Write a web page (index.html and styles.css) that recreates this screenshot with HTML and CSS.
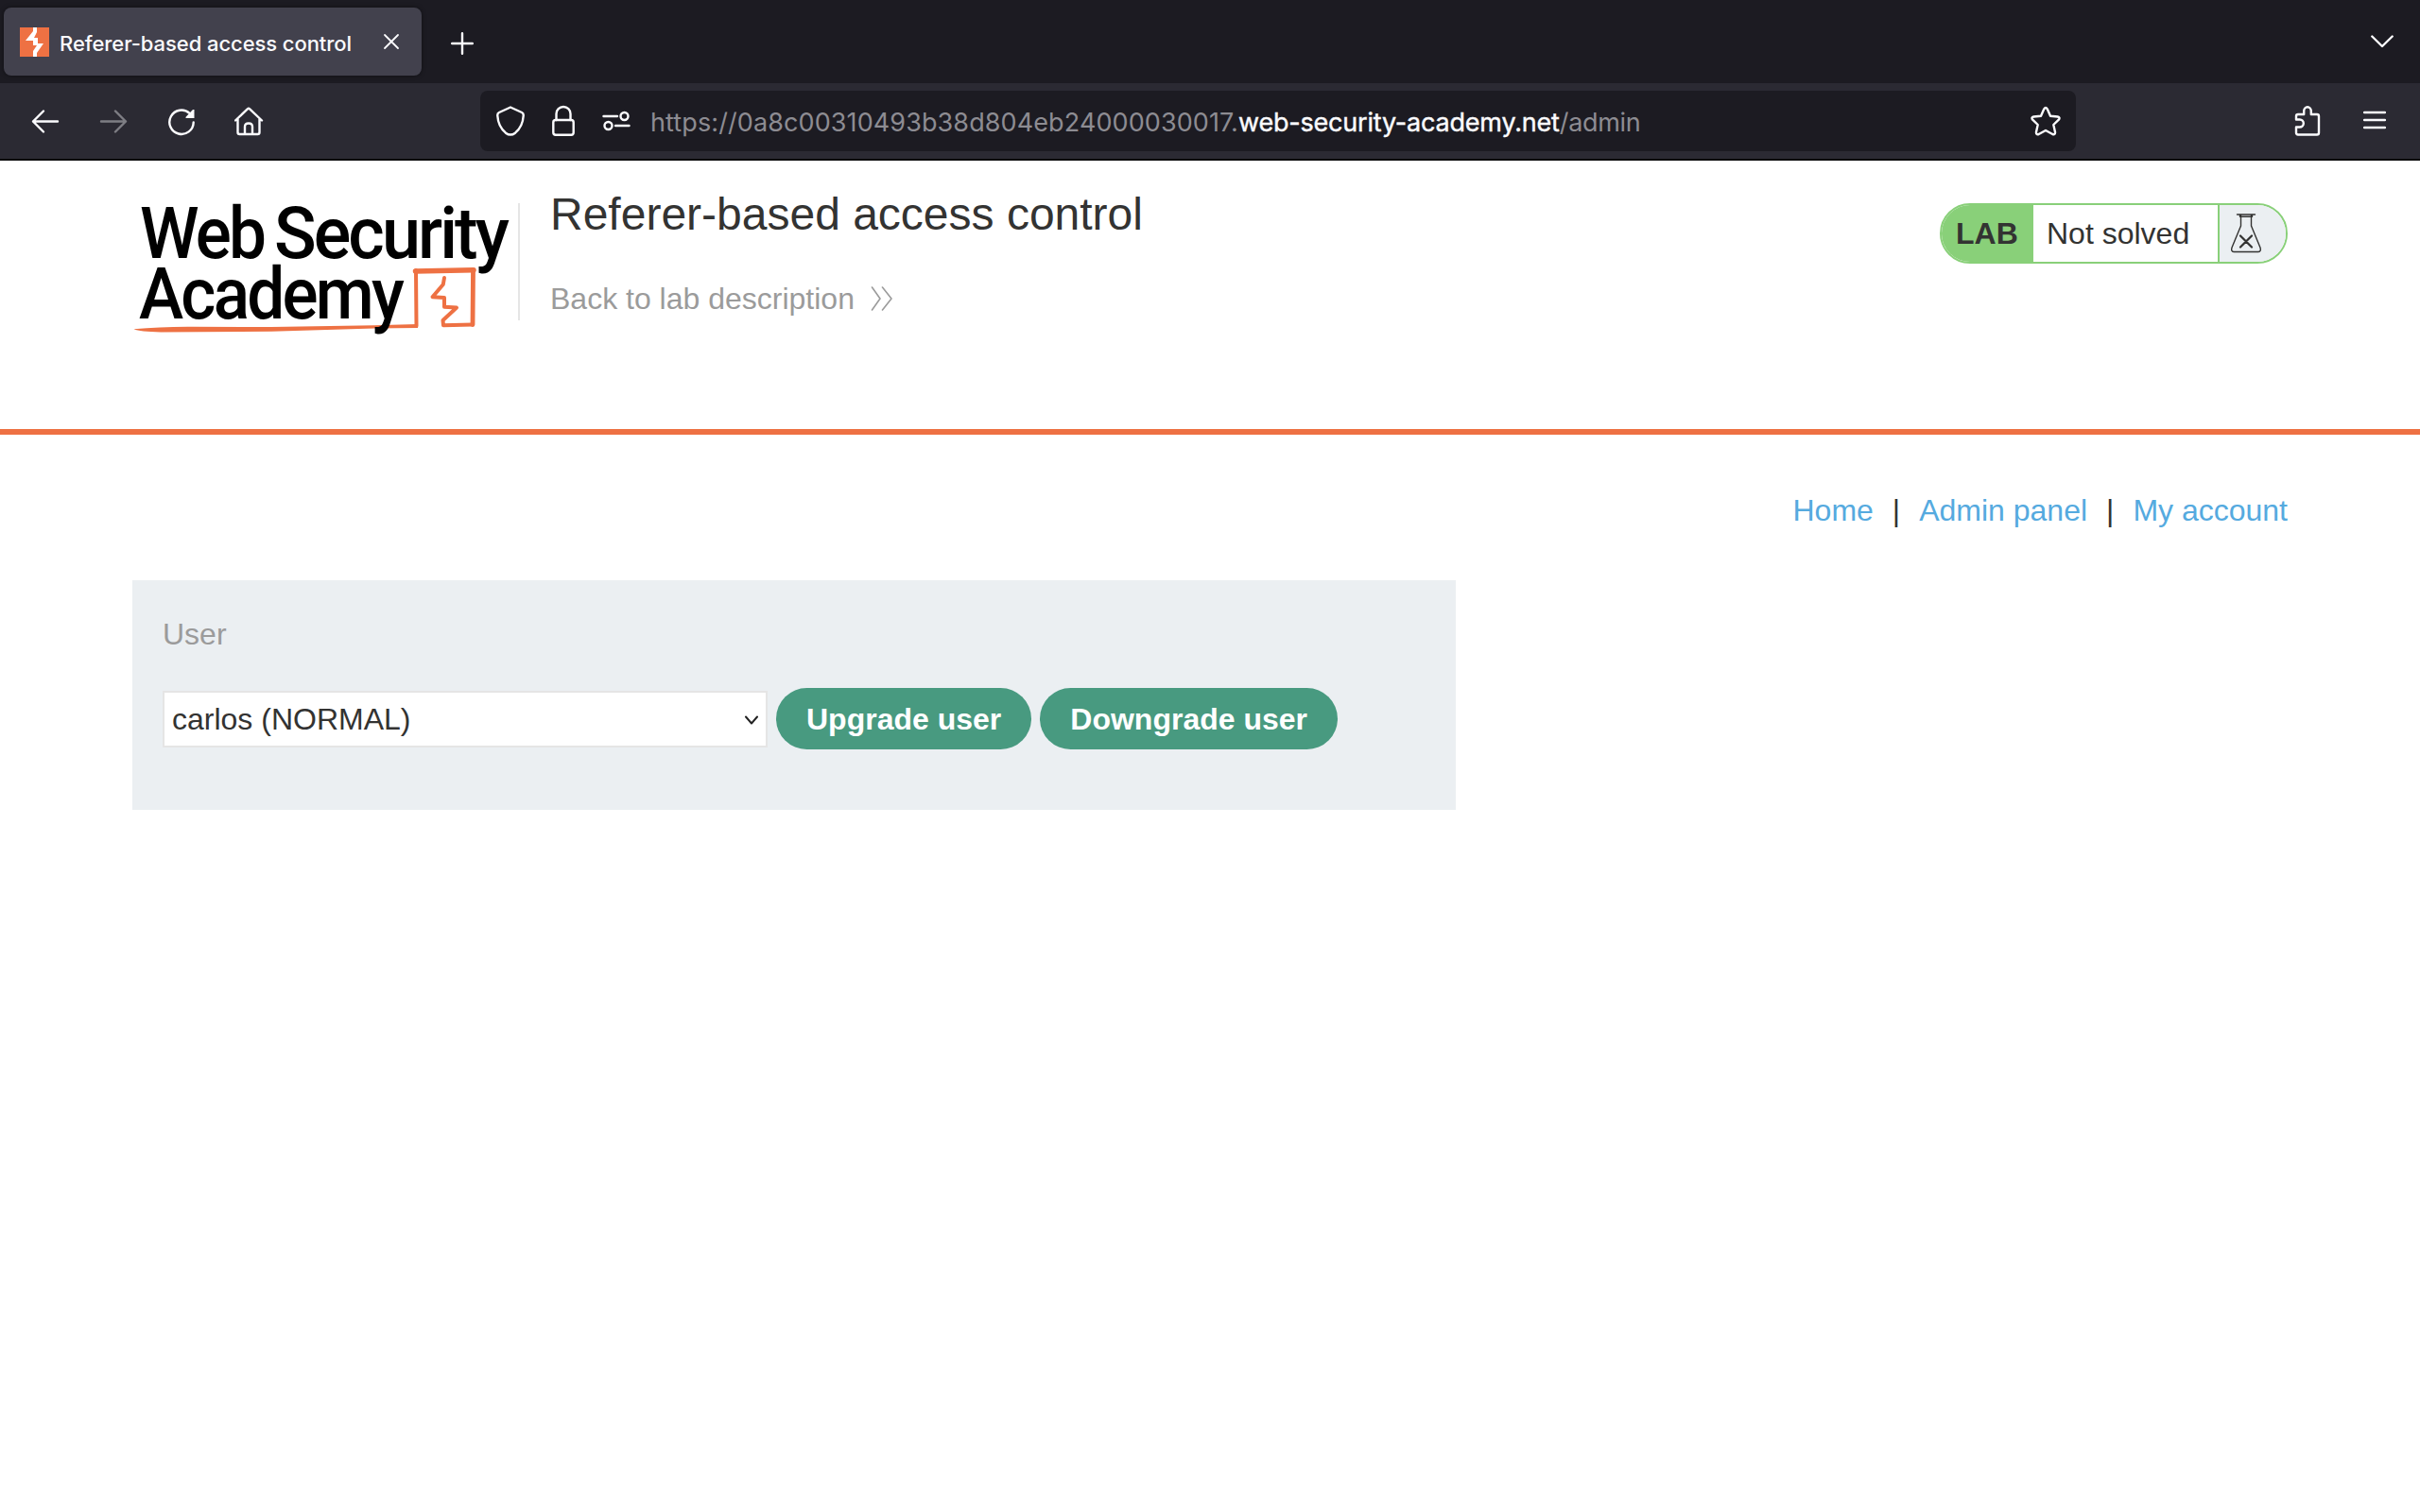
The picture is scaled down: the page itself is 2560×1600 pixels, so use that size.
FILE: index.html
```html
<!DOCTYPE html>
<html lang="en">
<head>
<meta charset="utf-8">
<title>Referer-based access control</title>
<link rel="stylesheet" href="styles.css">
</head>
<body>
<div class="tabs">
  <div class="tab">
    <svg class="favicon" viewBox="0 0 31 31"><rect width="31" height="31" fill="#ee7143"/><path d="M14 0h4v5l-3 6h4v6h6l-7 10v4h-4v-6l4-6h-4v-5H6l8-10z" fill="#fff"/></svg>
    <span class="tab-title">Referer-based access control</span>
    <svg class="tab-close" viewBox="0 0 18 18"><path d="M2 2l14 14M16 2L2 16"/></svg>
  </div>
  <svg class="new-tab" viewBox="0 0 24 24"><path d="M12 1.2v21.6M1.2 12h21.6"/></svg>
  <svg class="all-tabs" viewBox="0 0 24 14"><path d="M1.3 1.5L12 12L22.7 1.5"/></svg>
</div>
<div class="toolbar">
  <div class="nav-buttons">
    <svg viewBox="0 0 32 32"><path d="M29 16.500H3M14 5.500L3 16.500L14 27.500"/></svg>
    <svg class="dim" viewBox="0 0 32 32"><path d="M3 16.500h26M18 5.500l11 11l-11 11"/></svg>
    <svg viewBox="0 0 32 32"><path d="M28.700 17.500A12.700 12.700 0 1 1 24.500 7.800"/><path d="M29.500 4v9h-8.500q-1.200-.3-.4-1.300L28 4z" fill="#fbfbfe" stroke="none"/></svg>
    <svg viewBox="1 0 32 32"><path d="M2 15.500L14.800 3.300Q16 2.300 17.200 3.300L30 15.500M4.500 13.500V28Q4.500 30 6.500 30H25.500Q27.500 30 27.500 28V13.500M12 29.500V22Q12 18.500 16 18.500T20 22V29.500"/></svg>
  </div>
  <div class="urlbar">
    <svg class="shield" viewBox="0 0 32 34"><path d="M16 2.500L28 8Q30 9 29.700 11.500Q29 23 21 29.700Q16 33.500 11 29.700Q3 23 2.300 11.500Q2 9 4 8Z"/></svg>
    <svg class="lock" viewBox="0 0 26 34"><path d="M5.500 16V9.500a7.500 7.500 0 0 1 15 0V16"/><rect x="2.300" y="16" width="21.400" height="15.700" rx="2.500"/></svg>
    <svg class="perm" viewBox="0 0 30 22"><path d="M1.500 6H16M14 16H28.500"/><circle cx="23.500" cy="6" r="4"/><circle cx="6.500" cy="16" r="4"/></svg>
    <span class="url"><span class="sub">https://0a8c00310493b38d804eb24000030017.</span><span class="host">web-security-academy.net</span><span class="path">/admin</span></span>
    <svg class="star" viewBox="0 0 32 32"><path d="M14.300 3.300Q16 .6 17.700 3.300L21 10.700L28.700 11.500Q31.700 12.300 29.800 14.700L24.300 20L26 27.700Q26.300 31 23.300 30L16 26L8.700 30Q5.700 31 6 27.700L7.700 20L2.200 14.700Q.3 12.300 3.300 11.500L11 10.700Z"/></svg>
  </div>
  <svg class="ext" viewBox="0 0 28 34"><path d="M2 15.500V12Q2 10 4 10H10.200V6.500a3.800 4.200 0 0 1 7.600 0V10H24Q26 10 26 12V29.500Q26 31.500 24 31.500H4Q2 31.500 2 29.500V23.500H5.800a4 4 0 0 0 0-8Z"/></svg>
  <svg class="menu" viewBox="0 0 24 20"><path d="M1 2h22M1 10h22M1 18h22"/></svg>
</div>
<header class="lab-header">
  <svg class="logo" viewBox="0 -20 408 176">
    <g class="logo-mark">
      <path d="M300 80L300.500 139" stroke-width="4"/>
      <path d="M299.500 81L361 79.800" stroke-width="5.500"/>
      <path d="M360.500 80.500L360 137.500" stroke-width="4.800"/>
      <path d="M360 137.500L329 138.300L328.500 133L343 119.500L330 118.800V109L317.500 108.200L328.800 95L330 88" stroke-width="4"/>
      <path class="underline" d="M1.500 142.300Q30 139.500 63 139.700L147 140L256 138.300L302 137V141L256 141.500L147 144.700L30 145.500Q8 145 1.500 142.300Z"/>
    </g>
    <g class="logo-text"><text x="8" y="66.500" textLength="131" lengthAdjust="spacingAndGlyphs">Web</text><text x="150" y="66.500" textLength="246" lengthAdjust="spacingAndGlyphs">Security</text><text x="7" y="131" textLength="278" lengthAdjust="spacingAndGlyphs">Academy</text></g>
  </svg>
  <div class="heading">
    <h1>Referer-based access control</h1>
    <a class="back">Back to lab description <svg viewBox="0 0 24 26"><path d="M1.500 1l8.500 12L1.500 25M12.500 1l9.500 12L12.500 25"/></svg></a>
  </div>
  <div class="status">
    <b>LAB</b><span>Not solved</span>
    <i><svg viewBox="0 0 34 42"><path d="M7.500 1h19M11.500 1.500V13L2 36Q.8 40.200 4 40.500H30Q33.200 40.200 32 36L22.500 13V1.500M10.500 1v2.200h13V1"/><path d="M11 23.500l12 12M23 23.500l-12 12" stroke-width="2.200"/></svg></i>
  </div>
</header>
<main>
  <nav class="links"><a>Home</a><span>|</span><a>Admin panel</a><span>|</span><a>My account</a></nav>
  <form class="panel">
    <label>User</label>
    <div class="controls">
      <div class="select">carlos (NORMAL)<svg viewBox="0 0 16 11"><path d="M2 1.500L8 8.500L14 1.500"/></svg></div>
      <button type="button">Upgrade user</button>
      <button type="button">Downgrade user</button>
    </div>
  </form>
</main>
</body>
</html>
```
FILE: styles.css
```css
* { box-sizing: border-box; }
body { margin: 0; height: 1600px; overflow: hidden; background: #fff; color: #333332; font: 32px/37px "Liberation Sans", Arial, sans-serif; }
svg { display: block; flex: none; fill: none; stroke: #fbfbfe; stroke-width: 2.4; stroke-linecap: round; stroke-linejoin: round; }
.tabs { height: 88px; display: flex; align-items: center; padding: 0 28px 0 4px; background: #1c1b22; }
.tab { width: 442px; height: 72px; display: flex; align-items: center; padding: 0 23px 0 17px; border-radius: 8px; background: #42414d; box-shadow: 0 0 5px rgba(0,0,0,.45); }
.favicon { width: 31px; height: 31px; stroke: none; }
.tab-title { width: 325px; margin: 3px 0 0 11px; font: 500 22px/28px Inter, sans-serif; letter-spacing: -.07px; color: #fbfbfe; white-space: nowrap; }
.tab-close { width: 18px; height: 18px; margin-left: auto; stroke-width: 1.8; }
.new-tab { width: 24px; height: 24px; margin: 3px 0 0 31px; }
.all-tabs { width: 24px; height: 14px; margin-left: auto; }
.toolbar { height: 82px; display: flex; align-items: center; background: #2b2a33; border-bottom: 2px solid #0c0c0d; }
.nav-buttons { width: 508px; display: flex; gap: 40px; padding-left: 32px; }
.nav-buttons svg { width: 32px; height: 32px; }
.nav-buttons .dim { opacity: .4; }
.urlbar { width: 1688px; height: 64px; display: flex; align-items: center; border-radius: 8px; padding: 0 16px; background: #1c1b22; }
.shield { width: 32px; height: 34px; }
.lock { width: 26px; height: 34px; margin-left: 27px; }
.perm { width: 30px; height: 22px; margin-left: 28px; }
.url { margin: 3px 0 0 21px; font: 27px/34px Inter, sans-serif; color: #8d8c92; white-space: nowrap; display: flex; }
.url .sub { letter-spacing: .1px; }
.url .host { letter-spacing: -.2px; color: #fbfbfe; -webkit-text-stroke: .4px #fbfbfe; }
.url .path { letter-spacing: -.3px; }
.star { width: 32px; height: 32px; margin-left: auto; }
.ext { width: 28px; height: 34px; margin-left: 231px; }
.menu { width: 24px; height: 20px; margin: 0 0 2px 45px; }
.lab-header { height: 290px; display: flex; align-items: flex-start; padding: 0 140px; border-bottom: 6px solid #ee7143; }
.logo { width: 408px; height: 176px; margin-top: 16px; stroke: none; overflow: visible; }
.logo-mark { fill: none; stroke: #ee7143; stroke-linejoin: round; }
.underline { fill: #ee7143; stroke: none; }
.logo-text { font: 500 76px Roboto, sans-serif; letter-spacing: -3px; fill: #000; stroke: none; }
.heading { height: 124px; margin-top: 45px; padding-left: 32px; border-left: 2px solid #e5e5e5; }
.heading h1 { margin: -16px 0 44px; font: 48px/55px "Liberation Sans", Arial, sans-serif; }
.back { display: flex; align-items: center; color: #9b9b9b; }
.back svg { width: 24px; height: 26px; margin: -2px 0 0 17px; stroke: #9b9b9b; stroke-width: 1.6; }
.status { width: 368px; height: 64px; display: flex; margin: 45px 0 0 auto; overflow: hidden; border: 2px solid #89d079; border-radius: 32px; line-height: 60px; }
.status b { width: 97px; padding-left: 15px; background: #89d079; }
.status span { width: 195px; padding-left: 14px; }
.status i { flex: 1; display: flex; align-items: center; padding-left: 11px; border-left: 2px solid #89d079; background: #ebeff2; }
.status svg { width: 34px; height: 42px; stroke: #333332; stroke-width: 1.4; }
main { padding: 62px 140px 0; }
.links { display: flex; justify-content: flex-end; gap: 20px; }
.links a { color: #55aadf; }
.panel { width: 1400px; height: 243px; margin-top: 55px; padding: 39px 32px; background: #ebeff2; }
.panel label { display: block; color: #9b9b9b; }
.controls { display: flex; align-items: center; gap: 9px; margin-top: 38px; }
.select { width: 640px; height: 60px; display: flex; align-items: center; justify-content: space-between; padding: 1px 7px 0 8px; border: 2px solid #e5e5e5; background: #fff; }
.select svg { width: 16px; height: 11px; margin-top: 2px; stroke: #222; stroke-width: 2; }
button { height: 65px; padding: 2px 32px 0; border: 0; border-radius: 33px; background: #489a80; color: #fff; font: bold 32px/37px "Liberation Sans", Arial, sans-serif; }
```
